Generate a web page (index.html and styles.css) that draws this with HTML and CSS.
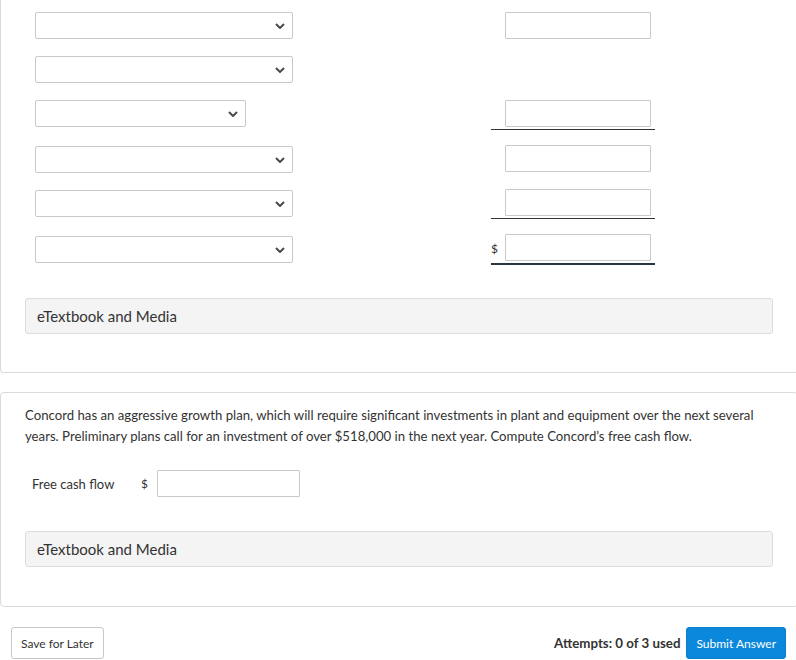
FILE: index.html
```html
<!DOCTYPE html>
<html>
<head>
<meta charset="utf-8">
<link rel="stylesheet" href="styles.css">
</head>
<body>
<div class="page">
  <section class="card card-first">
    <div class="rows">
      <div class="row">
        <div class="sel"><select></select><svg class="chev" width="10" height="6" viewBox="0 0 10 6"><path d="M1 1 L5 5 L9 1" /></svg></div>
        <div class="amt"><input type="text"></div>
      </div>
      <div class="row">
        <div class="sel"><select></select><svg class="chev" width="10" height="6" viewBox="0 0 10 6"><path d="M1 1 L5 5 L9 1" /></svg></div>
        <div class="amt"></div>
      </div>
      <div class="row row-tall">
        <div class="sel sel-short"><select></select><svg class="chev" width="10" height="6" viewBox="0 0 10 6"><path d="M1 1 L5 5 L9 1" /></svg></div>
        <div class="amt ul"><input type="text"></div>
      </div>
      <div class="row">
        <div class="sel"><select></select><svg class="chev" width="10" height="6" viewBox="0 0 10 6"><path d="M1 1 L5 5 L9 1" /></svg></div>
        <div class="amt up"><input type="text"></div>
      </div>
      <div class="row row-tall">
        <div class="sel"><select></select><svg class="chev" width="10" height="6" viewBox="0 0 10 6"><path d="M1 1 L5 5 L9 1" /></svg></div>
        <div class="amt ul up"><input type="text"></div>
      </div>
      <div class="row row-last">
        <div class="sel"><select></select><svg class="chev" width="10" height="6" viewBox="0 0 10 6"><path d="M1 1 L5 5 L9 1" /></svg></div>
        <div class="amt ul2 up2"><span class="cur">$</span><input type="text"></div>
      </div>
    </div>
    <div class="media">eTextbook and Media</div>
  </section>

  <section class="card card-second">
    <p class="question">Concord has an aggressive growth plan, which will require significant investments in plant and equipment over the next several years. Preliminary plans call for an investment of over $518,000 in the next year. Compute Concord’s free cash flow.</p>
    <div class="fcf">
      <span class="fcf-label">Free cash flow</span>
      <span class="fcf-cur">$</span>
      <input type="text" class="fcf-input">
    </div>
    <div class="media media-second">eTextbook and Media</div>
  </section>

  <footer class="footer">
    <button class="btn-save">Save for Later</button>
    <div class="submit-group">
      <span class="attempts">Attempts: 0 of 3 used</span>
      <button class="btn-submit">Submit Answer</button>
    </div>
  </footer>
</div>
</body>
</html>
```

FILE: styles.css
```css
html, body {
  margin: 0;
  padding: 0;
  background: #ffffff;
  overflow: hidden;
}
body {
  font-family: Lato, "Open Sans", Arial, sans-serif;
  color: #333333;
}
.page {
  width: 798px;
}
.card {
  border: 1px solid #dadada;
  border-radius: 4px;
  padding: 0 24px 38px 24px;
  background: #ffffff;
}
.card-first {
  border-top: none;
  border-top-left-radius: 0;
  border-top-right-radius: 0;
}
.rows {
  padding: 12px 0 0 10px;
}
.row {
  display: grid;
  grid-template-columns: 258px 164px;
  column-gap: 198px;
  align-items: start;
  height: 44px;
}
.row-tall {
  height: 46px;
}
.row-last {
  height: 30px;
}
.sel {
  position: relative;
  width: 258px;
  height: 27px;
}
.sel-short {
  width: 211px;
}
.sel select {
  appearance: none;
  -webkit-appearance: none;
  display: block;
  width: 100%;
  height: 27px;
  box-sizing: border-box;
  border: 1px solid #c9c9c9;
  border-radius: 2px;
  background: #ffffff;
  margin: 0;
}
.chev {
  position: absolute;
  right: 8px;
  top: 11px;
}
.chev path {
  fill: none;
  stroke: #4a4a4a;
  stroke-width: 2;
}
.amt {
  display: flex;
  align-items: center;
  justify-content: flex-end;
  width: 164px;
  box-sizing: border-box;
}
.amt.up {
  margin-top: -1px;
}
.amt.up2 {
  margin-top: -2px;
}
.amt input {
  width: 146px;
  height: 27px;
  box-sizing: border-box;
  border: 1px solid #c9c9c9;
  border-radius: 1px;
  margin: 0 4px 0 0;
  padding: 0;
  background: #ffffff;
}
.ul {
  border-bottom: 1px solid #333333;
  padding-bottom: 2px;
}
.ul2 {
  border-bottom: 2px solid #2b3540;
  padding-bottom: 2px;
}
.cur {
  font-size: 12px;
  margin-right: auto;
  padding-top: 2px;
}
.media {
  margin-top: 32px;
  height: 36px;
  box-sizing: border-box;
  border: 1px solid #dcdcdc;
  border-radius: 3px;
  background: #f4f4f4;
  font-size: 15px;
  line-height: 35px;
  padding-left: 11px;
  color: #333333;
}
.card-second {
  margin-top: 19px;
  padding-top: 12px;
  padding-bottom: 39px;
}
.question {
  margin: 0;
  font-size: 13.2px;
  line-height: 21px;
}
.fcf {
  display: flex;
  align-items: center;
  margin-top: 23px;
  padding-left: 7px;
  height: 27px;
}
.fcf-label {
  font-size: 13px;
  width: 109px;
}
.fcf-cur {
  font-size: 12px;
  width: 16px;
}
.fcf-input {
  width: 143px;
  height: 27px;
  box-sizing: border-box;
  border: 1px solid #c9c9c9;
  border-radius: 1px;
  margin: 0;
  padding: 0;
}
.media-second {
  margin-top: 34px;
}
.footer {
  display: flex;
  justify-content: space-between;
  align-items: center;
  margin-top: 20px;
  padding: 0 12px 0 11px;
}
.btn-save {
  height: 32px;
  font-family: Lato, Arial, sans-serif;
  font-size: 12px;
  color: #333333;
  background: #ffffff;
  border: 1px solid #c7c7c7;
  border-radius: 3px;
  padding: 0 9px;
  margin: 0;
}
.submit-group {
  display: flex;
  align-items: center;
  gap: 6px;
}
.attempts {
  font-size: 13.3px;
  font-weight: 700;
  color: #333333;
}
.btn-submit {
  height: 32px;
  font-family: Lato, Arial, sans-serif;
  font-size: 12px;
  color: #ffffff;
  background: #0b88db;
  border: 1px solid #0a7fcc;
  border-radius: 3px;
  padding: 0 9px;
  margin: 0;
}
```
